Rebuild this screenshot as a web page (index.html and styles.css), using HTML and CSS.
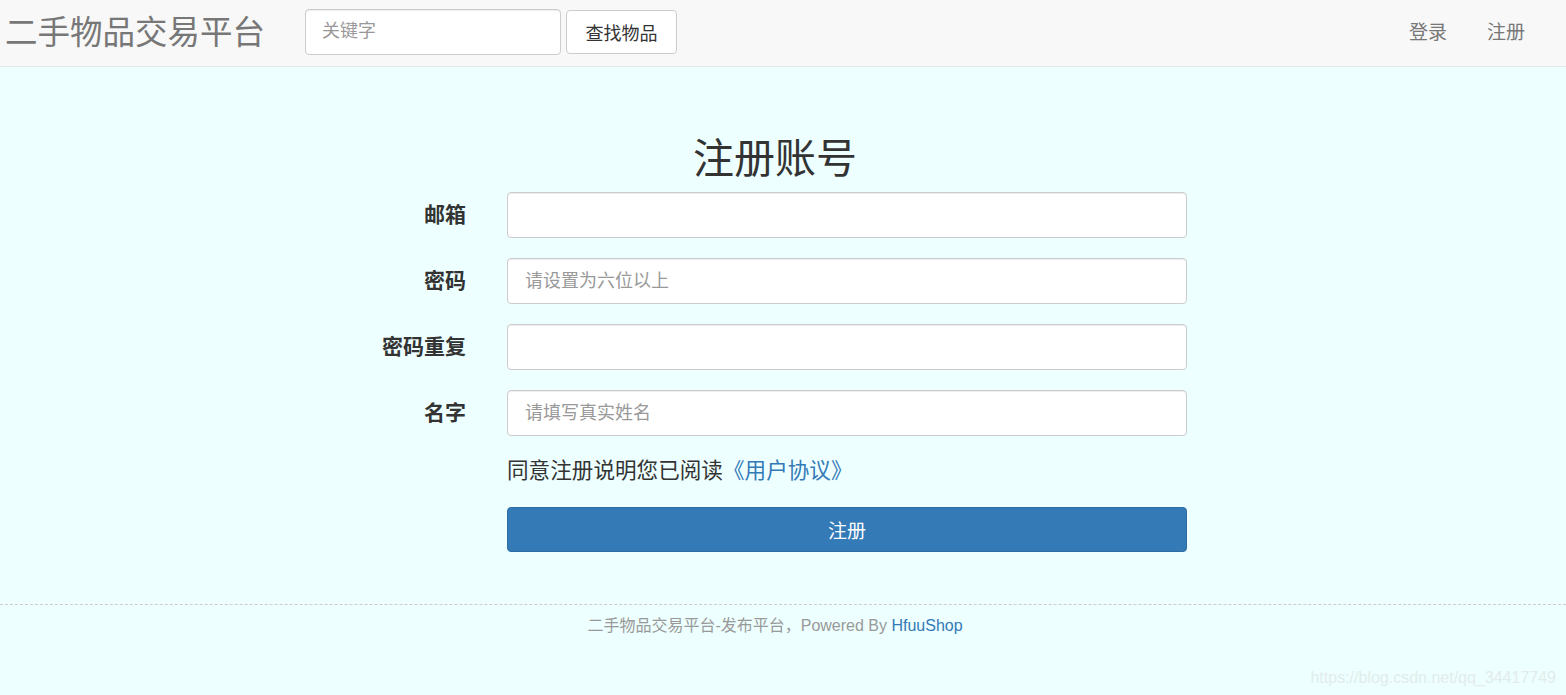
FILE: index.html
```html
<!DOCTYPE html>
<html lang="zh-CN">
<head>
<meta charset="utf-8">
<title>注册账号</title>
<link rel="stylesheet" href="styles.css">
</head>
<body>
<nav class="navbar">
  <a class="brand" href="#">二手物品交易平台</a>
  <form class="search">
    <input class="search-input" type="text" placeholder="关键字">
    <button class="btn-default" type="button">查找物品</button>
  </form>
  <ul class="nav-right">
    <li><a href="#">登录</a></li>
    <li><a href="#">注册</a></li>
  </ul>
</nav>
<main class="wrap">
  <h1 class="title">注册账号</h1>
  <form class="form">
    <label class="label">邮箱</label>
    <input class="field" type="text">
    <label class="label">密码</label>
    <input class="field" type="password" placeholder="请设置为六位以上">
    <label class="label">密码重复</label>
    <input class="field" type="password">
    <label class="label">名字</label>
    <input class="field" type="text" placeholder="请填写真实姓名">
    <span></span>
    <p class="agree">同意注册说明您已阅读<a href="#">《用户协议》</a></p>
    <span></span>
    <button class="btn-primary" type="button">注册</button>
  </form>
</main>
<footer class="footer">
  <p class="footer-text">二手物品交易平台-发布平台，Powered By <a href="#">HfuuShop</a></p>
</footer>
<div class="watermark">https://blog.csdn.net/qq_34417749</div>
</body>
</html>
```
FILE: styles.css
```css
* { box-sizing: border-box; }
html, body { height: 100%; }
body {
  margin: 0;
  background: #edffff;
  font-family: "Liberation Sans", Arial, "Noto Sans CJK SC", sans-serif;
  color: #333;
  position: relative;
  overflow: hidden;
}
a { text-decoration: none; }

.navbar {
  display: flex;
  align-items: center;
  height: 67px;
  background: #f8f8f8;
  border-bottom: 1px solid #e7e7e7;
}
.brand {
  margin-left: 5px;
  font-size: 32.5px;
  color: #777;
  line-height: 40px;
}
.search {
  display: flex;
  align-items: center;
  margin: 0 0 3px 40px;
}
.search-input {
  width: 256px;
  height: 46px;
  border: 1px solid #ccc;
  border-radius: 4px;
  padding: 0 16px;
  font-family: inherit;
  font-size: 18px;
  color: #555;
  background: #fff;
  box-shadow: inset 0 1px 1px rgba(0,0,0,.075);
}
.search-input::placeholder, .field::placeholder { color: #999; }
.btn-default {
  margin-left: 5px;
  width: 111px;
  height: 44px;
  border: 1px solid #ccc;
  border-radius: 4px;
  background: #fff;
  color: #333;
  font-family: inherit;
  font-size: 18px;
}
.nav-right {
  display: flex;
  list-style: none;
  margin: 0 21px 0 auto;
  padding: 0;
}
.nav-right a {
  display: block;
  padding: 0 20px;
  font-size: 19px;
  color: #777;
  line-height: 30px;
}

.wrap {
  width: 1550px;
  padding-top: 64px;
}
.title {
  margin: 0;
  text-align: center;
  font-size: 41px;
  font-weight: 400;
  line-height: 56px;
  color: #333;
}
.form {
  width: 1170px;
  margin: 5px auto 0;
  padding-left: 15px;
  display: grid;
  grid-template-columns: 261px 680px;
  column-gap: 41px;
  row-gap: 20px;
  align-items: center;
}
.label {
  text-align: right;
  font-weight: bold;
  font-size: 21px;
  color: #333;
  line-height: 30px;
}
.field {
  height: 46px;
  border: 1px solid #ccc;
  border-radius: 4px;
  padding: 0 17px;
  font-family: inherit;
  font-size: 18px;
  background: #fff;
  box-shadow: inset 0 1px 1px rgba(0,0,0,.075);
}
.agree {
  margin: 0 0 1px;
  font-size: 21.6px;
  line-height: 30px;
  color: #333;
}
.agree a { color: #337ab7; }
.btn-primary {
  height: 45px;
  border: 1px solid #2e6da4;
  border-radius: 4px;
  background: #337ab7;
  color: #fff;
  font-family: inherit;
  font-size: 19px;
}

.footer {
  margin-top: 52px;
  border-top: 1px dashed #ccc;
}
.footer-text {
  width: 1550px;
  margin: 0;
  padding-top: 10px;
  text-align: center;
  font-size: 16px;
  line-height: 22px;
  color: #999;
}
.footer-text a { color: #337ab7; }
.watermark {
  position: absolute;
  right: 10px;
  bottom: 8px;
  font-size: 16px;
  color: #e2ecec;
}
```
